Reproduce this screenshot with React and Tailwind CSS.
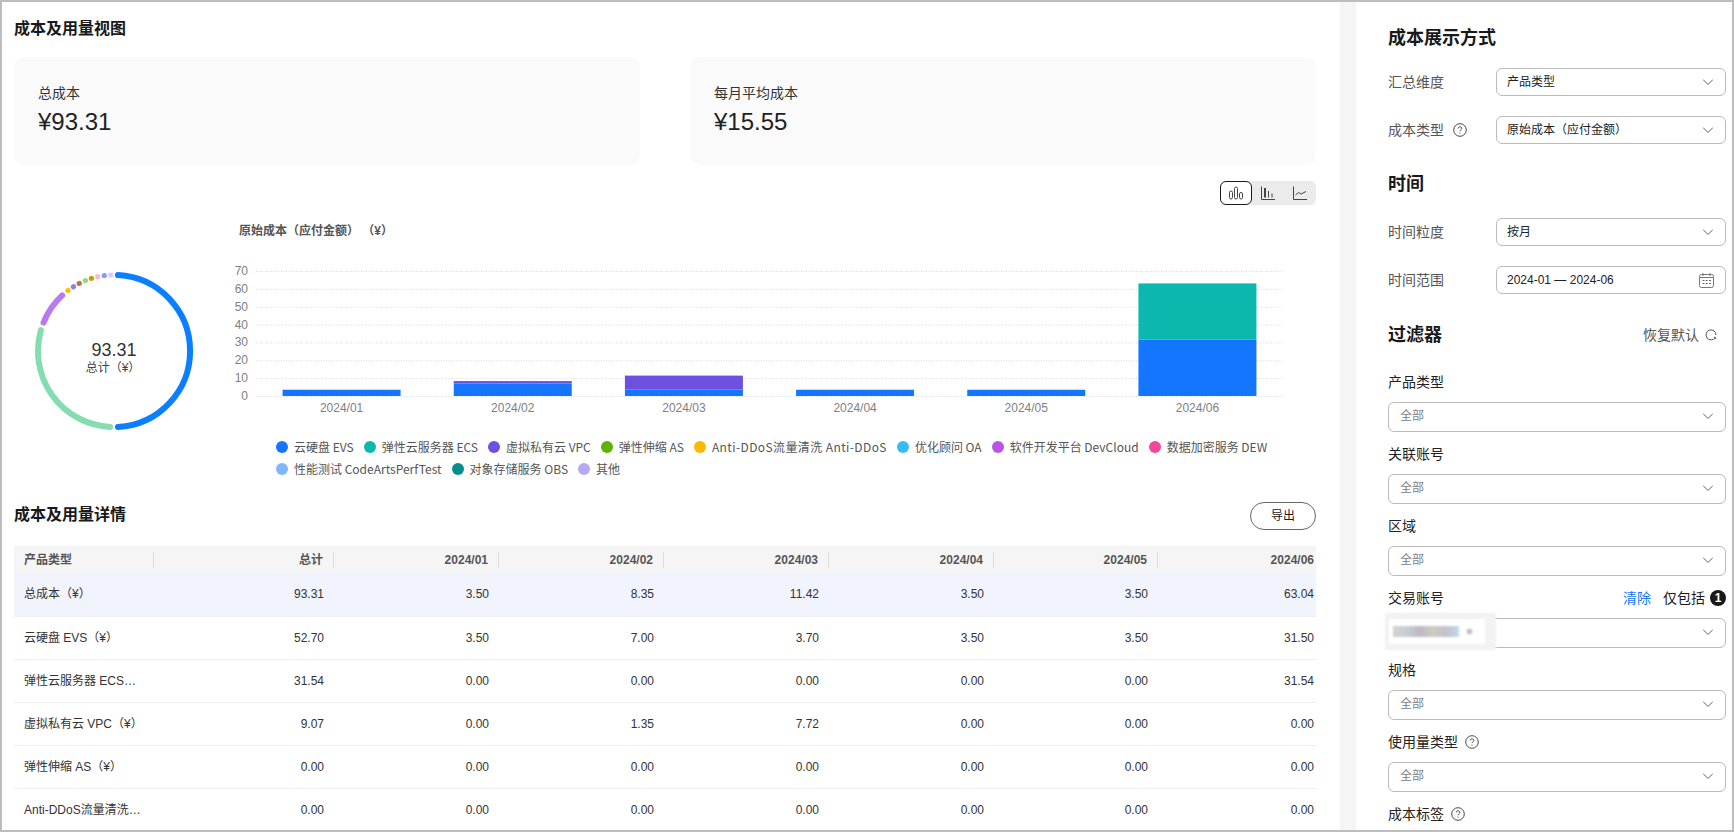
import React from "react";

const BLUE = "#1476ff";
const TEAL = "#0ab8ad";
const PURPLE = "#6e50e0";

function polar(a, r = 76, cx = 80, cy = 80) {
  const t = ((a - 90) * Math.PI) / 180;
  return [cx + r * Math.cos(t), cy + r * Math.sin(t)];
}
function arc(a0, a1) {
  const [x0, y0] = polar(a0);
  const [x1, y1] = polar(a1);
  const large = a1 - a0 > 180 ? 1 : 0;
  return `M${x0.toFixed(2)} ${y0.toFixed(2)}A76 76 0 ${large} 1 ${x1.toFixed(2)} ${y1.toFixed(2)}`;
}

const segments = [
  [3, 177, "#0a7fff"],
  [183, 286, "#86dcb1"],
  [292, 317, "#b87bef"],
  [322.6, 322.9, "#ffc000"],
  [327.6, 327.9, "#7d87e0"],
  [332.6, 332.9, "#c96a5e"],
  [337.8, 338.1, "#8fdc7a"],
  [342.6, 342.9, "#c79a1a"],
  [347.5, 347.8, "#ffb3d0"],
  [352.5, 352.8, "#7f9cff"],
  [357.4, 357.7, "#e0c8ff"],
];

function Donut() {
  return (
    <svg width="160" height="160" viewBox="0 0 160 160" fill="none">
      {segments.map(([a, b, c], i) => (
        <path key={i} d={arc(a, b)} stroke={c} strokeWidth={i < 3 ? 6 : 5} strokeLinecap="round" />
      ))}
      <text x="80" y="85" textAnchor="middle" fontSize="18" fill="#333">93.31</text>
      <text x="79" y="101" textAnchor="middle" fontSize="12" fill="#444">总计（¥）</text>
    </svg>
  );
}

const barData = [
  ["2024/01", 3.5, 0, 0],
  ["2024/02", 7.0, 1.35, 0],
  ["2024/03", 3.7, 7.72, 0],
  ["2024/04", 3.5, 0, 0],
  ["2024/05", 3.5, 0, 0],
  ["2024/06", 31.5, 0, 31.54],
];

function BarChart() {
  // svg origin is at page (219, 254)
  const left = 37;
  const right = 1064;
  const y0 = 142;
  const unit = 17.86 / 10;
  const step = (right - left) / 6;
  return (
    <svg width="1071" height="170" viewBox="0 0 1071 170" fill="none">
      {[0, 10, 20, 30, 40, 50, 60, 70].map((v) => {
        const y = y0 - v * unit;
        return (
          <g key={v}>
            <line x1={left} x2={right} y1={y + 0.5} y2={y + 0.5} stroke="#d5dbe6" strokeDasharray="1 1.5" />
            <text x="29" y={y + 4} textAnchor="end" fontSize="12" fill="#808080">{v}</text>
          </g>
        );
      })}
      {barData.map(([label, b, p, t], i) => {
        const x = left + step * i + (step - 118) / 2;
        const hb = b * unit;
        const hp = p * unit;
        const ht = t * unit;
        return (
          <g key={label}>
            <rect x={x} y={y0 - hb} width="118" height={hb} fill={BLUE} />
            {p > 0 && <rect x={x} y={y0 - hb - hp} width="118" height={hp} fill={PURPLE} />}
            {t > 0 && <rect x={x} y={y0 - hb - ht} width="118" height={ht} fill={TEAL} />}
            <text x={x + 59} y={y0 + 16} textAnchor="middle" fontSize="12" fill="#808080">{label}</text>
          </g>
        );
      })}
    </svg>
  );
}

const legend = [
  ["云硬盘 EVS", "#1476ff", ""],
  ["弹性云服务器 ECS", "#0ab8ad", ""],
  ["虚拟私有云 VPC", "#6e50e0", ""],
  ["弹性伸缩 AS", "#5cb300", ""],
  ["Anti-DDoS流量清洗 Anti-DDoS", "#ffb700", "tracking-[0.4px]"],
  ["优化顾问 OA", "#33bdf5", ""],
  ["软件开发平台 DevCloud", "#b855e6", ""],
  ["数据加密服务 DEW", "#f5479c", ""],
  ["性能测试 CodeArtsPerfTest", "#80b5ff", ""],
  ["对象存储服务 OBS", "#088c8c", ""],
  ["其他", "#b8a8f5", ""],
];

const cols = [140, 180, 165, 165, 165, 165, 164, 158];
const heads = ["产品类型", "总计", "2024/01", "2024/02", "2024/03", "2024/04", "2024/05", "2024/06"];
const rows = [
  ["总成本（¥）", "93.31", "3.50", "8.35", "11.42", "3.50", "3.50", "63.04"],
  ["云硬盘 EVS（¥）", "52.70", "3.50", "7.00", "3.70", "3.50", "3.50", "31.50"],
  ["弹性云服务器 ECS（¥）", "31.54", "0.00", "0.00", "0.00", "0.00", "0.00", "31.54"],
  ["虚拟私有云 VPC（¥）", "9.07", "0.00", "1.35", "7.72", "0.00", "0.00", "0.00"],
  ["弹性伸缩 AS（¥）", "0.00", "0.00", "0.00", "0.00", "0.00", "0.00", "0.00"],
  ["Anti-DDoS流量清洗 Anti-DDoS（¥）", "0.00", "0.00", "0.00", "0.00", "0.00", "0.00", "0.00"],
];

function Chevron() {
  return (
    <svg width="12" height="12" viewBox="0 0 12 12" fill="none" className="shrink-0">
      <path d="M1.2 3.8 6 8.4l4.8-4.6" stroke="#666" strokeWidth="1" />
    </svg>
  );
}

function Help() {
  return (
    <svg width="14" height="14" viewBox="0 0 14 14" fill="none" className="shrink-0">
      <circle cx="7" cy="7" r="6.3" stroke="#333" strokeWidth="0.9" />
      <path d="M5.2 5.5c0-1 .8-1.7 1.8-1.7s1.8.7 1.8 1.6c0 1.4-1.8 1.4-1.8 2.8" stroke="#333" strokeWidth="0.9" />
      <circle cx="7" cy="10" r="0.6" fill="#333" />
    </svg>
  );
}

function Calendar() {
  return (
    <svg width="15" height="15" viewBox="0 0 15 15" fill="none" className="shrink-0">
      <rect x="0.5" y="1.5" width="14" height="13" rx="2" stroke="#777" />
      <path d="M4 0v3M11 0v3M1 4.5h13" stroke="#777" />
      <path d="M3.5 7.5h2M6.7 7.5h2M10 7.5h2M3.5 10.5h2M6.7 10.5h2M10 10.5h2" stroke="#666" strokeWidth="1.2" />
    </svg>
  );
}

function Select({ children, grey, className = "" }) {
  return (
    <div className={`flex items-center justify-between rounded-md border border-[#bbbbbb] bg-white pr-[11px] text-xs ${className} ${grey ? "text-[#808080]" : "text-[#222222]"}`}>
      <span>{children}</span>
      {children === "2024-01 — 2024-06" ? <Calendar /> : <Chevron />}
    </div>
  );
}

function LabelRow({ label, help, value }) {
  return (
    <div className="flex items-center">
      <div className="flex w-[108px] shrink-0 items-center gap-[9px] text-sm text-[#555555]">
        {label}
        {help && <Help />}
      </div>
      <Select className="h-7 flex-1 pl-[10px]">{value}</Select>
    </div>
  );
}

function Filter({ label, help, right, children, overlay }) {
  return (
    <div className="mb-3">
      <div className="flex h-5 items-center justify-between text-sm text-[#222222]">
        <span className="flex items-center gap-[7px]">
          {label}
          {help && <Help />}
        </span>
        {right}
      </div>
      {children !== null && (
        <div className="relative mt-[10px]">
          <Select grey={!children} className="h-[30px] pb-[3px] pl-[11px]">{children || "全部"}</Select>
          {overlay}
        </div>
      )}
    </div>
  );
}

function H3({ children, className = "" }) {
  return <div className={`h-6 text-lg leading-6 font-bold text-[#191919] ${className}`}>{children}</div>;
}

function Card({ label, value }) {
  return (
    <div className="h-[108px] rounded-[10px] bg-[#fafafa] pt-[27px] pl-6">
      <div className="h-[18px] text-sm leading-[18px] text-[#333333]">{label}</div>
      <div className="mt-[6px] h-7 text-2xl leading-7 text-[#222222]">{value}</div>
    </div>
  );
}

function Toggle() {
  return (
    <div className="flex h-6 w-24 rounded-md bg-[#ebebeb]">
      <div className="flex w-[32px] items-center justify-center rounded-md border border-[#191919] bg-white">
        <svg width="14" height="14" viewBox="0 0 14 14" fill="none" stroke="#444" strokeWidth="1">
          <rect x="0.5" y="5" width="3" height="8" rx="1.5" />
          <rect x="5.5" y="1" width="3" height="12" rx="1.5" />
          <rect x="10.5" y="6.5" width="3" height="6.5" rx="1.5" />
        </svg>
      </div>
      <div className="flex w-8 items-center justify-center">
        <svg width="14" height="14" viewBox="0 0 14 14" fill="none" stroke="#444" strokeWidth="1">
          <path d="M0.5 0.5v13h13.5" />
          <path d="M3.5 2v9.5M4.5 2v9.5M7.5 5v6.5M11 7.5v4" />
        </svg>
      </div>
      <div className="flex w-8 items-center justify-center">
        <svg width="14" height="14" viewBox="0 0 14 14" fill="none" stroke="#444" strokeWidth="1">
          <path d="M0.5 0.5v13h13.5" />
          <path d="M2.5 9l3-2.5 2.5 1.5 5-2.5" />
        </svg>
      </div>
    </div>
  );
}

export default function App() {
  return (
    <div className="flex h-[832px] w-[1734px] overflow-hidden border-2 border-[#bdbdbd] bg-white font-['Liberation_Sans','Noto_Sans_CJK_SC',sans-serif]">
      <main className="w-[1338px] shrink-0 overflow-hidden pt-4 pr-[24px] pl-3">
        <div className="h-[22px] text-base leading-[22px] font-bold text-[#191919]">成本及用量视图</div>
        <div className="mt-[17px] grid grid-cols-2 gap-[50px]">
          <Card label="总成本" value="¥93.31" />
          <Card label="每月平均成本" value="¥15.55" />
        </div>
        <div className="mt-4 flex justify-end">
          <Toggle />
        </div>
        <div className="flex">
          <div className="w-[205px] shrink-0 pt-[66px] pl-5">
            <Donut />
          </div>
          <div>
            <div className="mt-[17px] h-[18px] pl-5 text-xs leading-[18px] font-bold whitespace-pre text-[#555555]">原始成本（应付金额） （¥）</div>
            <div className="mt-[14px] h-[170px]">
              <BarChart />
            </div>
            <div className="mt-[12px] flex w-[1071px] flex-wrap gap-x-[10px] pl-[57px] font-['Noto_Sans_CJK_SC',sans-serif] text-xs leading-[22px] text-[#555555]">
              {legend.map(([t, c, extra]) => (
                <div key={t} className={`flex items-center gap-[6px] ${extra}`}>
                  <span className="h-3 w-3 rounded-full" style={{ background: c }} />
                  {t}
                </div>
              ))}
            </div>
          </div>
        </div>
        <div className="mt-[22px] flex h-7 items-center justify-between">
          <div className="pb-[3px] text-base font-bold text-[#191919]">成本及用量详情</div>
          <div className="flex h-7 w-[66px] items-center justify-center rounded-full border border-[#666666] text-xs text-[#191919]">导出</div>
        </div>
        <table className="mt-4 w-[1302px] table-fixed border-collapse text-xs">
          <colgroup>
            {cols.map((w, i) => (
              <col key={i} style={{ width: w }} />
            ))}
          </colgroup>
          <thead>
            <tr className="h-[27px] bg-[#f5f5f5]">
              {heads.map((h, i) => (
                <th key={h} className="p-0 font-bold text-[#555555]">
                  <div className={`flex h-4 items-center ${i === 0 ? "justify-start pl-[10px]" : i === 7 ? "justify-end pr-[2px]" : "justify-end pr-[10px]"} ${i < 7 ? "border-r border-[#dddddd]" : ""}`}>
                    {h}
                  </div>
                </th>
              ))}
            </tr>
          </thead>
          <tbody>
            {rows.map((r, ri) => (
              <tr key={ri} className={`h-[43px] border-b border-[#eeeeee] text-[#333333] ${ri === 0 ? "bg-[#f1f4fc]" : ""}`}>
                {r.map((c, i) => (
                  <td key={i} className={i === 0 ? "truncate pr-[10px] pl-[10px] text-left" : i === 7 ? "pr-[2px] text-right" : "pr-[10px] text-right"}>
                    {c}
                  </td>
                ))}
              </tr>
            ))}
          </tbody>
        </table>
      </main>
      <div className="w-4 shrink-0 bg-[#f5f5f5]" />
      <aside className="flex-1 overflow-hidden pt-6 pr-[6px] pl-8">
        <H3>成本展示方式</H3>
        <div className="mt-[18px] flex flex-col gap-5">
          <LabelRow label="汇总维度" value="产品类型" />
          <LabelRow label="成本类型" help value="原始成本（应付金额）" />
        </div>
        <H3 className="mt-7">时间</H3>
        <div className="mt-[22px] flex flex-col gap-5">
          <LabelRow label="时间粒度" value="按月" />
          <LabelRow label="时间范围" value="2024-01 — 2024-06" />
        </div>
        <div className="mt-[29px] flex h-6 items-center justify-between pr-[9px]">
          <H3>过滤器</H3>
          <div className="flex items-center gap-[6px] text-sm text-[#555555]">
            恢复默认
            <svg width="12" height="12" viewBox="0 0 12 12" fill="none" stroke="#555" strokeWidth="1">
              <path d="M10.2 8.6A5 5 0 1 1 11 6" />
              <path d="M9 8.2l1.5 0.3 0.3 1.7" />
            </svg>
          </div>
        </div>
        <div className="mt-[25px]">
          <Filter label="产品类型" />
          <Filter label="关联账号" />
          <Filter label="区域" />
          <Filter
            label="交易账号"
            right={
              <span className="flex items-center">
                <span className="text-[#1476ff]">清除</span>
                <span className="ml-3 text-[#191919]">仅包括</span>
                <span className="ml-[5px] flex h-4 w-4 items-center justify-center rounded-full bg-[#191919] text-xs leading-none font-bold text-white">1</span>
              </span>
            }
            overlay={
              <div className="absolute -top-[5px] -left-[3px] flex h-[37px] w-[111px] items-center bg-[#f2f2f2] pl-[4px] blur-[1px]">
                <div className="flex h-[25px] w-[96px] items-center bg-white px-[4px]">
                  <div className="h-[11px] w-[66px] bg-[linear-gradient(90deg,#d8d0d0,#c4d0d4,#bdb8c4,#cdcabc,#c4c0cc,#c0dce8)]" />
                  <div className="ml-[8px] h-[5px] w-[5px] bg-[#bbbbbb]" />
                </div>
              </div>
            }
          >
            {" "}
          </Filter>
          <Filter label="规格" />
          <Filter label="使用量类型" help />
          <Filter label="成本标签" help>{null}</Filter>
        </div>
      </aside>
    </div>
  );
}
